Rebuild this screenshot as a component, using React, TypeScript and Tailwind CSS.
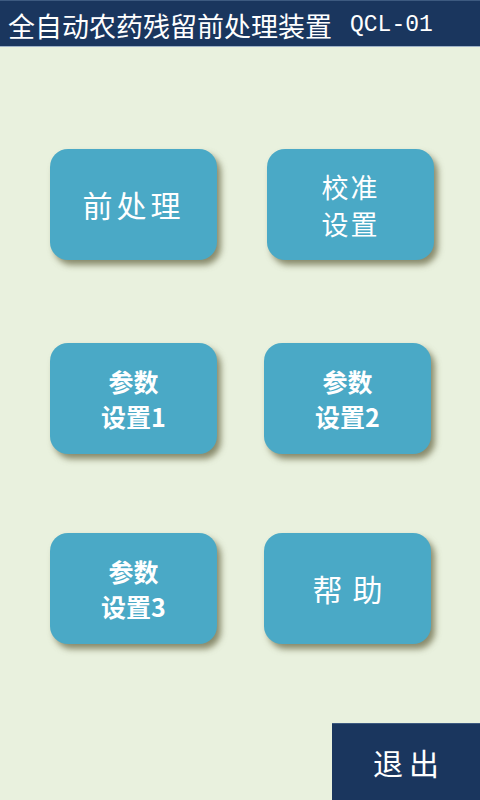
import React from "react";

const cjk = "font-['Noto_Sans_CJK_SC',sans-serif]";

function MenuButton({ children, className = "" }: { children: React.ReactNode; className?: string }) {
    return (
        <button
            className={`flex h-[111px] w-[167px] flex-col items-center justify-center rounded-[18px] bg-[#4aa9c6] text-white shadow-[4px_5px_6px_rgba(95,95,60,0.7)] ${cjk} ${className}`}
        >
            {children}
        </button>
    );
}

export default function App() {
    return (
        <div className="flex h-[800px] w-[480px] flex-col bg-[#e9f1de]">
            {/* header */}
            <div className="flex h-[47px] items-center border-t border-b border-t-[#3d5a80] border-b-[#9fb3c8] bg-[#1a365e] pl-[8px] pt-[3px] text-white">
                <span className={`text-[27px] leading-none ${cjk}`}>全自动农药残留前处理装置</span>
                <span className="ml-[18px] font-['Liberation_Mono',monospace] text-[23px] leading-none">QCL-01</span>
            </div>

            {/* menu grid */}
            <div className="mt-[102px] grid grid-cols-[167px_167px] gap-x-[47px] pl-[50px]">
                <MenuButton className="text-[30px] tracking-[4px]">前处理</MenuButton>
                <MenuButton className="ml-[3px] text-[27px] leading-[37px] tracking-[2px]">
                    <span>校准</span>
                    <span>设置</span>
                </MenuButton>
            </div>
            <div className="mt-[83px] grid grid-cols-[167px_167px] gap-x-[47px] pl-[50px]">
                <MenuButton className="text-[25px] font-bold leading-[35px]">
                    <span>参数</span>
                    <span>设置1</span>
                </MenuButton>
                <MenuButton className="text-[25px] font-bold leading-[35px]">
                    <span>参数</span>
                    <span>设置2</span>
                </MenuButton>
            </div>
            <div className="mt-[79px] grid grid-cols-[167px_167px] gap-x-[47px] pl-[50px]">
                <MenuButton className="text-[25px] font-bold leading-[35px]">
                    <span>参数</span>
                    <span>设置3</span>
                </MenuButton>
                <MenuButton className="text-[30px] tracking-[10px] pl-[10px]">帮助</MenuButton>
            </div>

            {/* exit */}
            <div className="mt-auto flex justify-end">
                <button
                    className={`flex h-[77px] w-[148px] items-center justify-center border-t border-t-[#3d5a80] bg-[#1a365e] pl-[6px] text-[30px] tracking-[6px] text-white ${cjk}`}
                >
                    退出
                </button>
            </div>
        </div>
    );
}
